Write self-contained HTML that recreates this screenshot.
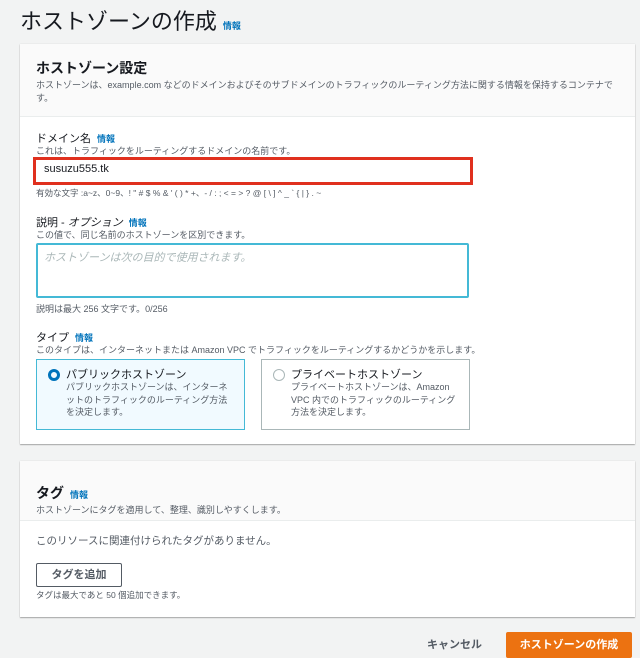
<!DOCTYPE html>
<html><head><meta charset="utf-8"><style>
body{margin:0;width:640px;height:657px;background:#f2f3f3;font-family:"Liberation Sans","Noto Sans CJK JP",sans-serif;color:#16191f;position:relative;overflow:hidden}
.a{position:absolute;white-space:nowrap}
.info{color:#0073bb;font-weight:bold;font-size:9px;margin-left:6px}
.card{position:absolute;left:20px;width:615px;background:#fff;box-shadow:0 1px 1px rgba(0,0,0,.3),0 0 1px rgba(0,0,0,.15)}
.hd{background:#fafafa;border-bottom:1px solid #eaeded;position:absolute;left:0;right:0;top:0}
.s{font-size:9px;color:#545b64}
.l{font-size:11px;color:#16191f;font-weight:normal}
</style></head><body>
<div class="a" style="left:20px;top:4px;font-size:22px;color:#16191f">ホストゾーンの作成<span class="info" style="font-size:9px">情報</span></div>

<div class="card" style="top:44px;height:400px">
 <div class="hd" style="height:72px"></div>
 <div class="a" style="left:16px;top:14px;font-size:14px;font-weight:bold">ホストゾーン設定</div>
 <div class="a s" style="left:16px;top:35px;line-height:13px;white-space:normal;width:590px">ホストゾーンは、example.com などのドメインおよびそのサブドメインのトラフィックのルーティング方法に関する情報を保持するコンテナです。</div>
 <div class="a l" style="left:16px;top:86px">ドメイン名<span class="info">情報</span></div>
 <div class="a s" style="left:16px;top:100px">これは、トラフィックをルーティングするドメインの名前です。</div>
 <div class="a" style="left:13px;top:113px;width:434px;height:22px;border:3px solid #e0301e;background:#fff;box-sizing:content-box"></div>
 <div class="a" style="left:24px;top:119px;font-size:11px">susuzu555.tk</div>
 <div class="a s" style="left:16px;top:143px;font-size:8.5px">有効な文字 :a~z、0~9、! " # $ % &amp; ' ( ) * +、- / : ; &lt; = &gt; ? @ [ \ ] ^ _ ` { | } . ~</div>
 <div class="a l" style="left:16px;top:170px">説明 - <i>オプション</i><span class="info">情報</span></div>
 <div class="a s" style="left:16px;top:184px">この値で、同じ名前のホストゾーンを区別できます。</div>
 <div class="a" style="left:16px;top:199px;width:429px;height:51px;border:2px solid #44b9d6;border-radius:2px"></div>
 <div class="a" style="left:24px;top:205px;font-size:11px;color:#aab7b8;font-style:italic">ホストゾーンは次の目的で使用されます。</div>
 <div class="a s" style="left:16px;top:258px">説明は最大 256 文字です。0/256</div>
 <div class="a l" style="left:16px;top:285px">タイプ<span class="info">情報</span></div>
 <div class="a s" style="left:16px;top:299px">このタイプは、インターネットまたは Amazon VPC でトラフィックをルーティングするかどうかを示します。</div>
 <div class="a" style="left:16px;top:315px;width:207px;height:69px;border:1px solid #44b9d6;background:#f1faff"></div>
 <div class="a" style="left:28px;top:325px;width:6px;height:6px;border:3px solid #0073bb;border-radius:50%"></div>
 <div class="a" style="left:46px;top:322px;font-size:11px">パブリックホストゾーン</div>
 <div class="a s" style="left:46px;top:337px;line-height:12.5px">パブリックホストゾーンは、インターネ<br>ットのトラフィックのルーティング方法<br>を決定します。</div>
 <div class="a" style="left:241px;top:315px;width:207px;height:69px;border:1px solid #aab7b8"></div>
 <div class="a" style="left:253px;top:325px;width:10px;height:10px;border:1px solid #aab7b8;border-radius:50%"></div>
 <div class="a" style="left:271px;top:322px;font-size:11px">プライベートホストゾーン</div>
 <div class="a s" style="left:271px;top:337px;line-height:12.5px">プライベートホストゾーンは、Amazon<br>VPC 内でのトラフィックのルーティング<br>方法を決定します。</div>
</div>

<div class="card" style="top:461px;height:156px">
 <div class="hd" style="height:59px"></div>
 <div class="a" style="left:16px;top:22px;font-size:14px;font-weight:bold">タグ<span class="info">情報</span></div>
 <div class="a s" style="left:16px;top:42px">ホストゾーンにタグを適用して、整理、識別しやすくします。</div>
 <div class="a" style="left:16px;top:72px;font-size:10.5px;color:#545b64">このリソースに関連付けられたタグがありません。</div>
 <div class="a" style="left:16px;top:102px;width:84px;height:22px;border:1px solid #545b64;border-radius:2px;font-size:11px;font-weight:bold;text-align:center;line-height:22px;color:#545b64">タグを追加</div>
 <div class="a s" style="left:16px;top:128px;font-size:8.5px">タグは最大であと 50 個追加できます。</div>
</div>

<div class="a" style="left:427px;top:636px;font-size:11px;font-weight:bold;color:#545b64">キャンセル</div>
<div class="a" style="left:506px;top:632px;width:126px;height:26px;background:#ec7211;color:#fff;font-size:11px;font-weight:bold;text-align:center;line-height:26px;border-radius:2px">ホストゾーンの作成</div>
</body></html>
